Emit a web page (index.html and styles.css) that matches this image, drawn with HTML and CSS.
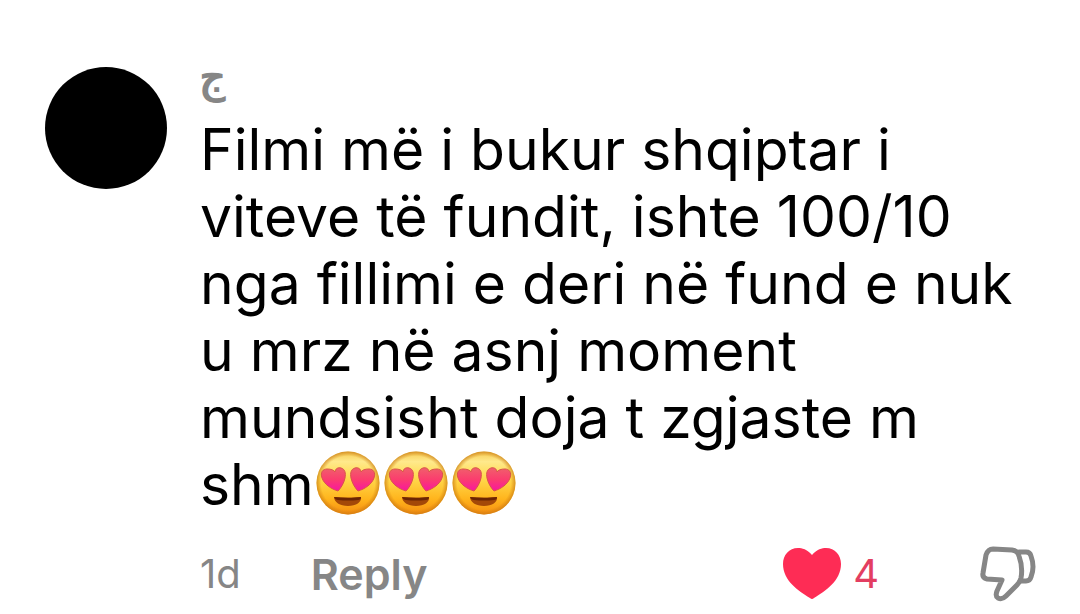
FILE: index.html
```
<!DOCTYPE html>
<html lang="sq">
<head>
  <meta charset="UTF-8" />
  <meta name="viewport" content="width=device-width, initial-scale=1.0"/>
  <title>Comment</title>
  <link rel="stylesheet" href="styles.css">
</head>
<body>
  <!-- Shared emoji shape -->
  <svg class="sprite" aria-hidden="true">
    <defs>
      <linearGradient id="face" x1="0" y1="0" x2="0" y2="1">
        <stop offset="0" stop-color="#f5ca50"/>
        <stop offset="0.16" stop-color="#ffe98c"/>
        <stop offset="0.4" stop-color="#ffdb50"/>
        <stop offset="0.75" stop-color="#ffb51d"/>
        <stop offset="1" stop-color="#f58c10"/>
      </linearGradient>
      <radialGradient id="edge">
        <stop offset="0.85" stop-color="#d07a10" stop-opacity="0"/>
        <stop offset="1" stop-color="#c87912" stop-opacity="0.7"/>
      </radialGradient>
      <linearGradient id="love" x1="0" y1="0" x2="0" y2="1">
        <stop offset="0" stop-color="#f0606c"/>
        <stop offset="0.5" stop-color="#fb3d6e"/>
        <stop offset="1" stop-color="#f816a0"/>
      </linearGradient>
      <symbol id="heart-eyes" viewBox="0 0 64 64">
        <circle cx="32" cy="32" r="31.5" fill="url(#face)"/>
        <circle cx="32" cy="32" r="31.5" fill="url(#edge)"/>
        <path d="M22 40C15 38 8 33 6 27C4 21 7 18 11 18C15 18 18 19 19 21C19 18 22 16 25 17C29 18 30 22 29 27C28 32 25 37 22 40Z" fill="url(#love)" stroke="#d8544a" stroke-width="1"/>
        <path d="M42 40C49 38 56 33 58 27C60 21 57 18 53 18C49 18 46 19 45 21C45 18 42 16 39 17C35 18 34 22 35 27C36 32 39 37 42 40Z" fill="url(#love)" stroke="#d8544a" stroke-width="1"/>
        <path d="M18 46C27 47 37 47 45 46C46 51 40 55 32 55C24 55 18 51 18 46Z" fill="#a34808"/>
        <path d="M18 46C27 47 37 47 45 46C45 48 44 49 42 49Q32 50 22 49C20 49 19 48 18 46Z" fill="#6b2503"/>
      </symbol>
    </defs>
  </svg>

  <article class="comment">
    <div class="avatar"></div>
    <div class="content">
      <h2 class="username" lang="ar">ج</h2>
      <p class="text">Filmi më i bukur shqiptar i viteve të fundit, ishte 100/10 nga fillimi e deri në fund e nuk u mrz në asnj moment mundsisht doja t zgjaste m shm<span class="emojis" role="img" aria-label="Heart eyes"><svg class="emoji"><use href="#heart-eyes"/></svg><svg class="emoji"><use href="#heart-eyes"/></svg><svg class="emoji"><use href="#heart-eyes"/></svg></span></p>
      <footer class="actions">
        <span class="time">1d</span>
        <button type="button" class="reply">Reply</button>
        <button type="button" class="like" aria-label="Like, 4">
          <svg class="heart" viewBox="0 0 58 52"><path d="M29 7C34 1 39 0 43 0C52 0 58 7 58 16C58 33 42 43 31 50Q29 52 27 50C16 43 0 33 0 16C0 7 6 0 15 0C19 0 24 1 29 7Z" fill="#fe2c55"/></svg>
          <span>4</span>
        </button>
        <button type="button" class="dislike" aria-label="Dislike">
          <svg class="thumb" viewBox="0 0 56 56" fill="none" stroke="#868686" stroke-width="5" stroke-linecap="round" stroke-linejoin="round">
            <path d="M13 3L32 4Q38 5 39 10Q43 21 41 32Q40 36 37 39L26 50Q22 54 18 52Q15 50 17 45L22 34L7 33Q2 32 3 27L6 9Q8 3 13 3Z"/>
            <path d="M39 6H46Q50 6 51 10Q55 21 51 31Q50 35 46 35H40"/>
          </svg>
        </button>
      </footer>
    </div>
  </article>
</body>
</html>
```
FILE: styles.css
```
* { margin: 0; padding: 0; box-sizing: border-box; }
body {
  font-family: Inter, "Noto Sans", sans-serif;
  background: #fff;
  color: #000;
}
.sprite {
  position: absolute;
  width: 0;
  height: 0;
}
.comment {
  display: flex;
  align-items: flex-start;
  gap: 33px;
  padding: 67px 44px 0 45px;
}
.avatar {
  flex-shrink: 0;
  width: 122px;
  height: 122px;
  border-radius: 50%;
  background: #000;
}
.content {
  flex: 1;
  min-width: 0;
}
.username {
  height: 49px;
  font-family: "DejaVu Sans Mono", monospace;
  font-size: 44px;
  line-height: 20px;
  font-weight: bold;
  color: #868686;
}
.text {
  font-size: 57px;
  line-height: 67px;
}
.emojis { white-space: nowrap; }
.emoji {
  width: 64px;
  height: 64px;
  margin: 0 2px;
  vertical-align: -10px;
}
.actions {
  display: flex;
  align-items: center;
  margin-top: 28px;
  font-size: 40px;
  line-height: 56px;
  color: #868686;
}
.actions button {
  border: none;
  background: none;
  font: inherit;
  color: inherit;
  cursor: pointer;
}
.actions .reply {
  margin-left: 70px;
  font-size: 43px;
  font-weight: 600;
}
.actions .like {
  display: flex;
  align-items: center;
  gap: 12px;
  margin-left: auto;
  color: #e33e61;
}
.heart {
  width: 58px;
  height: 52px;
}
.actions .dislike {
  display: flex;
  margin-left: 101px;
}
.thumb {
  width: 56px;
  height: 56px;
}
```
